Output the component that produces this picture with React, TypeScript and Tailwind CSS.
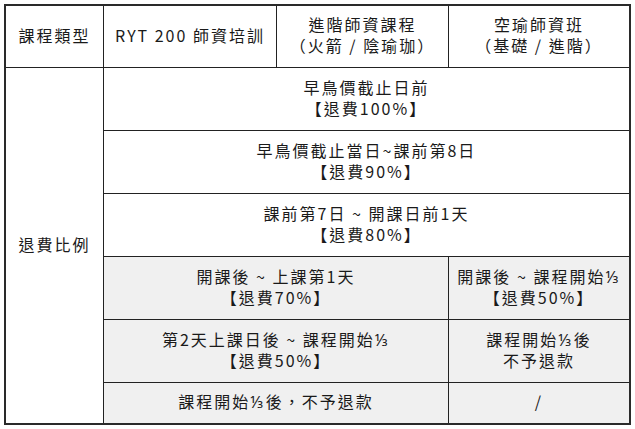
import React from "react";

const font = { fontFamily: '"Noto Sans CJK TC", "Noto Sans", sans-serif' };

function Cell({
  children,
  className = "",
}: {
  children: React.ReactNode;
  className?: string;
}) {
  return (
    <div
      className={
        "flex flex-col items-center justify-center pb-[3px] text-center text-[16px] leading-[21px] tracking-[2px] text-[#1a1a1a] border-[#222] " +
        className
      }
    >
      {children}
    </div>
  );
}

export default function App() {
  return (
    <div className="w-[635px] h-[429px] bg-white pt-[4px] pl-[4px]" style={font}>
      <div className="w-[627px] border-2 border-[#2a2a2a] grid grid-cols-[98px_173px_172px_180px] grid-rows-[62px_63px_63px_63px_63px_63px_40px]">
        <Cell className="border-r border-b">課程類型</Cell>
        <Cell className="border-r border-b">RYT 200 師資培訓</Cell>
        <Cell className="border-r border-b">
          <span>進階師資課程</span>
          <span>（火箭 / 陰瑜珈）</span>
        </Cell>
        <Cell className="border-b">
          <span>空瑜師資班</span>
          <span>（基礎 / 進階）</span>
        </Cell>

        <Cell className="row-span-6 border-r">退費比例</Cell>

        <Cell className="col-span-3 border-b">
          <span>早鳥價截止日前</span>
          <span>【退費100%】</span>
        </Cell>
        <Cell className="col-span-3 border-b">
          <span>早鳥價截止當日~課前第8日</span>
          <span>【退費90%】</span>
        </Cell>
        <Cell className="col-span-3 border-b">
          <span>課前第7日 ~ 開課日前1天</span>
          <span>【退費80%】</span>
        </Cell>

        <Cell className="col-span-2 border-r border-b bg-[#f0f0f0]">
          <span>開課後 ~ 上課第1天</span>
          <span>【退費70%】</span>
        </Cell>
        <Cell className="border-b bg-[#f0f0f0] tracking-[1px]">
          <span>開課後 ~ 課程開始⅓</span>
          <span className="tracking-[2px]">【退費50%】</span>
        </Cell>

        <Cell className="col-span-2 border-r border-b bg-[#f0f0f0]">
          <span>第2天上課日後 ~ 課程開始⅓</span>
          <span>【退費50%】</span>
        </Cell>
        <Cell className="border-b bg-[#f0f0f0]">
          <span>課程開始⅓後</span>
          <span>不予退款</span>
        </Cell>

        <Cell className="col-span-2 border-r bg-[#f0f0f0]">課程開始⅓後，不予退款</Cell>
        <Cell className="bg-[#f0f0f0]">/</Cell>
      </div>
    </div>
  );
}
